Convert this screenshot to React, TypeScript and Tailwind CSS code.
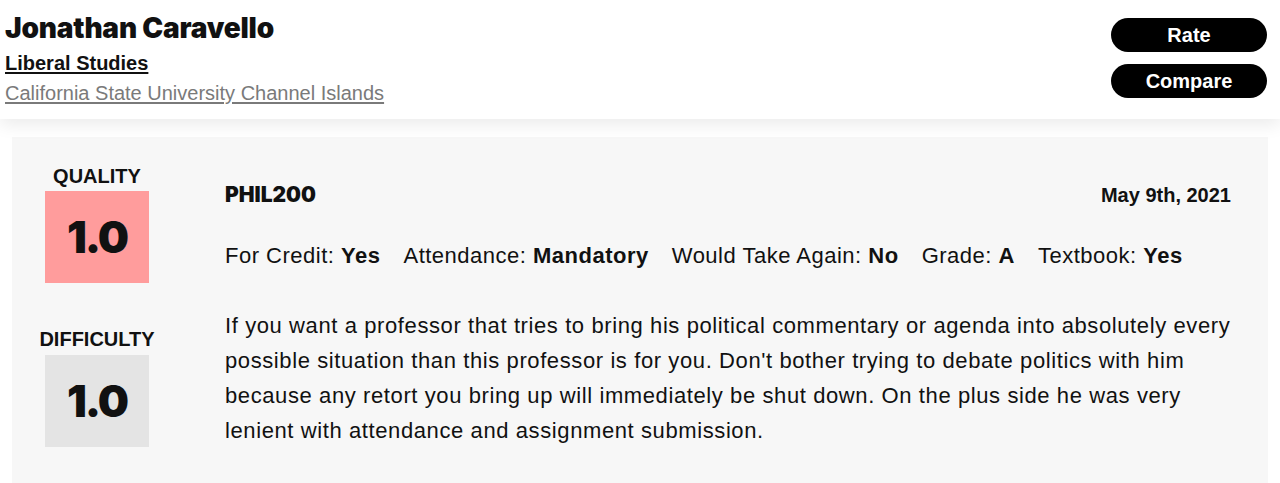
export default function App() {
  const heavy = { fontFamily: 'Inter, "Liberation Sans", sans-serif' };
  return (
    <div className="min-h-[483px] bg-white text-[#111]" style={{ fontFamily: '"Liberation Sans", Arial, sans-serif' }}>
      {/* header */}
      <div className="relative z-10 flex items-start justify-between bg-white px-[5px] pb-[12px] pt-[10px] shadow-[0_6px_16px_rgba(0,0,0,0.08)]">
        <div>
          <h1 className="text-[28px] font-black leading-[36px] tracking-[-0.2px]" style={heavy}>
            Jonathan Caravello
          </h1>
          <div className="mt-[4px] text-[20px] font-bold leading-[26px] underline underline-offset-2">Liberal Studies</div>
          <div className="mt-[3px] text-[20px] leading-[28px] text-[#7a7a7a] underline underline-offset-2">
            California State University Channel Islands
          </div>
        </div>
        <div className="mr-[8px] mt-[8px] flex flex-col gap-[12px]">
          <button className="h-[34px] w-[156px] rounded-full bg-black text-[20px] font-bold text-white">Rate</button>
          <button className="h-[34px] w-[156px] rounded-full bg-black text-[20px] font-bold text-white">Compare</button>
        </div>
      </div>

      {/* rating card */}
      <div className="px-[12px] pt-[18px]">
        <div className="flex bg-[#f7f7f7] pb-[35px] pl-[33px] pr-[37px] pt-[26px]">
          <div className="flex w-[104px] flex-col items-center">
            <div className="mb-[2px] whitespace-nowrap text-[20px] font-bold leading-[26px]">QUALITY</div>
            <div className="flex h-[92px] w-[104px] items-center justify-center bg-[#ff9c9c]">
              <span className="text-[44px] font-black tracking-[-2px]" style={heavy}>1.0</span>
            </div>
            <div className="mb-[3px] mt-[43px] whitespace-nowrap text-[20px] font-bold leading-[26px]">DIFFICULTY</div>
            <div className="flex h-[92px] w-[104px] items-center justify-center bg-[#e4e4e4]">
              <span className="text-[44px] font-black tracking-[-2px]" style={heavy}>1.0</span>
            </div>
          </div>
          <div className="ml-[76px] flex-1">
            <div className="mt-[20px] flex items-center justify-between">
              <span className="text-[21px] font-black leading-[24px]" style={heavy}>PHIL200</span>
              <span className="text-[20px] font-bold leading-[24px]">May 9th, 2021</span>
            </div>
            <div className="mt-[36px] flex gap-[23px] text-[22px] leading-[26px] tracking-[0.5px]">
              <span>For Credit: <b>Yes</b></span>
              <span>Attendance: <b>Mandatory</b></span>
              <span>Would Take Again: <b>No</b></span>
              <span>Grade: <b>A</b></span>
              <span>Textbook: <b>Yes</b></span>
            </div>
            <p className="mt-[39px] text-[22px] leading-[35px] tracking-[0.6px]">
              If you want a professor that tries to bring his political commentary or agenda into absolutely every
              possible situation than this professor is for you. Don't bother trying to debate politics with him
              because any retort you bring up will immediately be shut down. On the plus side he was very
              lenient with attendance and assignment submission.
            </p>
          </div>
        </div>
      </div>
    </div>
  );
}
